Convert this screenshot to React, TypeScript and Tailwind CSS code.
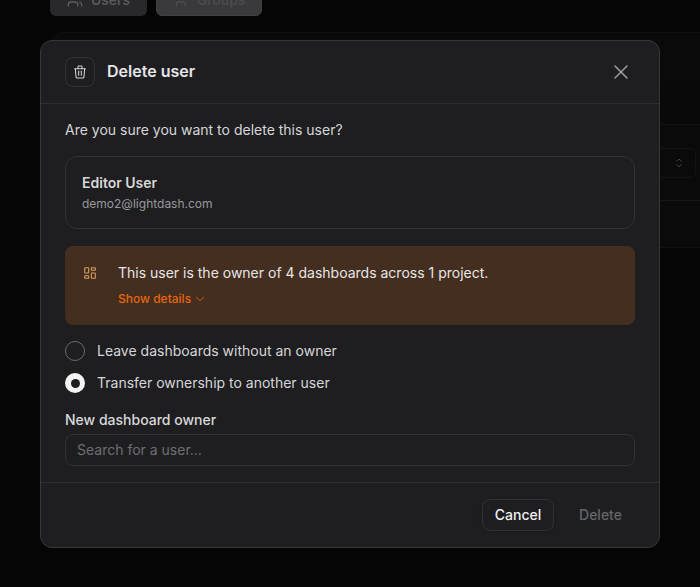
import { ChevronDown, ChevronsUpDown, User, Users } from "lucide-react";

const TrashIcon = () => (
  <svg width="16" height="16" viewBox="0 0 24 24" fill="none" stroke="currentColor" strokeWidth="1.6" strokeLinecap="round" strokeLinejoin="round">
    <path d="M4 7h16" />
    <path d="M10 11v6" />
    <path d="M14 11v6" />
    <path d="M5 7l1 12a2 2 0 0 0 2 2h8a2 2 0 0 0 2 -2l1 -12" />
    <path d="M9 7v-3a1 1 0 0 1 1 -1h4a1 1 0 0 1 1 1v3" />
  </svg>
);

const CloseIcon = () => (
  <svg width="24" height="24" viewBox="0 0 24 24" fill="none" stroke="currentColor" strokeWidth="1.5" strokeLinecap="round" strokeLinejoin="round">
    <path d="M18 6l-12 12" />
    <path d="M6 6l12 12" />
  </svg>
);

const DashboardIcon = () => (
  <svg width="16" height="16" viewBox="0 0 24 24" fill="none" stroke="currentColor" strokeWidth="1.6" strokeLinecap="round" strokeLinejoin="round">
    <path d="M5 4h4a1 1 0 0 1 1 1v6a1 1 0 0 1 -1 1h-4a1 1 0 0 1 -1 -1v-6a1 1 0 0 1 1 -1" />
    <path d="M5 16h4a1 1 0 0 1 1 1v2a1 1 0 0 1 -1 1h-4a1 1 0 0 1 -1 -1v-2a1 1 0 0 1 1 -1" />
    <path d="M15 12h4a1 1 0 0 1 1 1v6a1 1 0 0 1 -1 1h-4a1 1 0 0 1 -1 -1v-6a1 1 0 0 1 1 -1" />
    <path d="M15 4h4a1 1 0 0 1 1 1v2a1 1 0 0 1 -1 1h-4a1 1 0 0 1 -1 -1v-2a1 1 0 0 1 1 -1" />
  </svg>
);

// page behind the modal, almost hidden by the overlay
const Background = () => (
  <div className="absolute inset-0 overflow-hidden bg-[#050505]">
    <div className="flex h-[16px] items-end gap-[9px] pl-[50px]">
      <div className="flex h-[32px] w-[97px] shrink-0 items-center justify-center gap-2 rounded-md bg-[#29292b] text-sm font-medium text-[#5c5c60]">
        <Users size={16} />
        Users
      </div>
      <div className="flex h-[32px] w-[106px] shrink-0 items-center justify-center gap-2 rounded-md border border-[#404042] bg-[#3a3a3c] text-sm font-medium text-[#4c4c4e]">
        <User size={16} />
        Groups
      </div>
    </div>
    <div className="mt-[16px] ml-[50px] w-[680px] rounded-tl-xl border-t border-[#101011] bg-[#0a0a0a]">
      <div className="h-[53px]" />
      <div className="h-[39px] border-b border-[#131314] bg-[#090909]" />
      <div className="flex h-[76px] items-center border-b border-[#151516] pl-[580px]">
        <div className="flex h-[30px] w-[66px] items-center justify-end rounded-md border border-[#141415] pr-[10px] text-[#404042]">
          <ChevronsUpDown size={12} />
        </div>
      </div>
      <div className="h-[47px] border-b border-[#121213]" />
    </div>
  </div>
);

export default function App() {
  return (
    <div className="relative h-[587px] w-[700px] overflow-hidden bg-[#050505] font-['Inter',sans-serif] antialiased">
      <Background />
      <div className="absolute top-[40px] left-[40px] flex h-[508px] w-[620px] flex-col rounded-xl border border-[#37373a] bg-[#1e1e20]">
        <header className="flex h-[63px] items-center justify-between border-b border-[#2f2f32] pr-[26px] pl-[24px]">
          <div className="flex items-center gap-3">
            <div className="flex h-[30px] w-[30px] items-center justify-center rounded-lg border border-[#323235] text-[#d0d0d2]">
              <TrashIcon />
            </div>
            <h2 className="pb-[2px] text-base font-semibold text-[#e6e6e8]">Delete user</h2>
          </div>
          <span className="text-[#a0a0a4]">
            <CloseIcon />
          </span>
        </header>

        <div className="flex flex-1 flex-col px-[24px] pt-[15px]">
          <p className="text-sm leading-[22px] text-[#d6d6d8]">Are you sure you want to delete this user?</p>
          <div className="mt-[15px] flex h-[73px] flex-col justify-center rounded-xl border border-[#323235] px-[16px]">
            <div className="text-sm leading-[20px] font-semibold text-[#d8d8da]">Editor User</div>
            <div className="mt-[2px] text-xs leading-[18px] text-[#99999d]">demo2@lightdash.com</div>
          </div>
          <div className="mt-[17px] flex h-[79px] rounded-lg bg-[#432e20] pt-[16px] pl-[17px]">
            <span className="mt-[3px] text-[#d8a060]">
              <DashboardIcon />
            </span>
            <div className="ml-[20px]">
              <p className="text-sm leading-[22px] text-[#e8e6e4]">This user is the owner of 4 dashboards across 1 project.</p>
              <button className="mt-[6px] flex items-center gap-[2px] text-xs leading-[18px] font-medium text-[#e8670f]">
                Show details
                <ChevronDown size={14} strokeWidth={1.5} />
              </button>
            </div>
          </div>

          <label className="mt-[16px] flex h-[20px] items-center gap-[12px] text-sm text-[#d6d6d8]">
            <span className="h-[20px] w-[20px] rounded-full border border-[#6a6a6e]" />
            Leave dashboards without an owner
          </label>
          <label className="mt-[12px] flex h-[20px] items-center gap-[12px] text-sm text-[#d6d6d8]">
            <span className="flex h-[20px] w-[20px] items-center justify-center rounded-full bg-[#f4f4f4]">
              <span className="h-[9px] w-[9px] rounded-full bg-[#1e1e20]" />
            </span>
            Transfer ownership to another user
          </label>

          <div className="mt-[17px] text-sm leading-[20px] font-medium text-[#d8d8da]">New dashboard owner</div>
          <div className="mt-[4px] flex h-[32px] items-center rounded-lg border border-[#323235] px-[11px] text-sm text-[#6e6e72]">
            Search for a user...
          </div>
        </div>

        <footer className="flex h-[65px] items-center justify-end gap-[12px] border-t border-[#2f2f32] pr-[24px]">
          <button className="h-[32px] w-[72px] rounded-lg border border-[#323235] bg-[#1e1e20] text-sm font-medium text-[#f0f0f2] shadow-sm">
            Cancel
          </button>
          <button className="h-[32px] w-[69px] text-sm font-medium text-[#66666a]">Delete</button>
        </footer>
      </div>
    </div>
  );
}
